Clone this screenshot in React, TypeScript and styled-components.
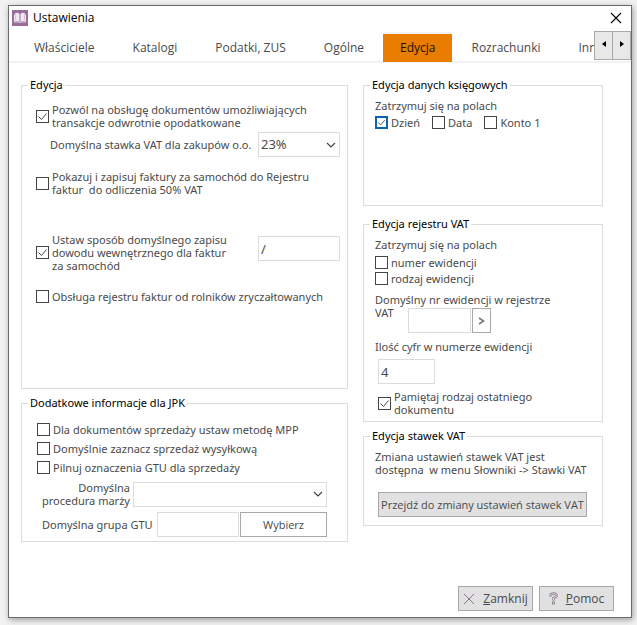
import React, { useId } from "react";
import styled, { createGlobalStyle } from "styled-components";

const GlobalStyle = createGlobalStyle`
  *, *::before, *::after { box-sizing: border-box; }
  body {
    margin: 0;
    background: #f2f2f2;
    color: #4a4a4a;
    font: 11px/13px "Noto Sans", "Open Sans", sans-serif;
  }
  button, input, select { font: inherit; color: inherit; margin: 0; border-radius: 0; }
`;

const Page = styled.div`
  display: flex;
  min-height: 100vh;
  padding: 5px 5px 7px 8px;
`;

const Window = styled.main`
  flex: 1;
  min-width: 0;
  display: flex;
  flex-direction: column;
  background: #fff;
  border: 1px solid #6b6b6b;
  box-shadow: 1px 2px 6px rgba(0, 0, 0, 0.35);
`;

const TitleBar = styled.header`
  display: flex;
  align-items: center;
  gap: 5px;
  height: 24px;
  padding: 0 9px 0 3px;
`;

const Title = styled.h1`
  flex: 1;
  margin: 0;
  color: #000;
  font: 12px/16px "Open Sans", "Noto Sans", sans-serif;
`;

const CloseButton = styled.button`
  display: flex;
  padding: 0;
  border: 0;
  background: none;
  color: #000;
`;

const TabBar = styled.nav`
  position: relative;
  border-bottom: 2px solid #f2f2f2;
`;

const TabList = styled.div`
  display: flex;
  height: 32px;
  padding: 2px 0 0 6px;
  margin-bottom: -1px;
  overflow: hidden;
`;

const Tab = styled.button<{ $active?: boolean }>`
  flex: none;
  padding: 0 ${(p) => (p.$active ? 17 : 19)}px;
  border: 0;
  border-top: 2px solid ${(p) => (p.$active ? "#f2f2f2" : "transparent")};
  background: ${(p) => (p.$active ? "#e87d00" : "transparent")};
  background-clip: padding-box;
  color: ${(p) => (p.$active ? "#1c0c00" : "#4a4a4a")};
  font: 12px/16px "Open Sans", "Noto Sans", sans-serif;
`;

const TabScroller = styled.div`
  position: absolute;
  top: 1px;
  right: 0;
  display: flex;
`;

const ScrollButton = styled.button`
  display: flex;
  align-items: center;
  justify-content: center;
  width: 19px;
  height: 29px;
  padding: 0 0 3px;
  border: 1px solid #a8a8a8;
  background: #e8e8e8;
  & + & { margin-left: -1px; }
`;

const Columns = styled.div`
  display: grid;
  grid-template-columns: minmax(0, 327fr) minmax(0, 240fr);
  gap: 15px;
  padding: 14px 28px 0 12px;
`;

const Column = styled.div`
  display: flex;
  flex-direction: column;
  gap: 6px;
`;

const Group = styled.fieldset<{ $minHeight?: number; $top?: number; $before?: number }>`
  min-width: 0;
  min-height: ${(p) => p.$minHeight ?? 0}px;
  margin: ${(p) => p.$before ?? 0}px 0 0;
  padding: ${(p) => p.$top ?? 6}px 7px 4px 11px;
  border: 1px solid #dcdcdc;
`;

const Legend = styled.legend`
  margin-left: -5px;
  padding: 0 2px;
  color: #000;
  line-height: 16px;
`;

type RowProps = {
  $top?: number;
  $indent?: number;
  $end?: number;
  $align?: string;
  $gap?: number;
  $spread?: boolean;
};

const Row = styled.div<RowProps>`
  display: flex;
  align-items: ${(p) => p.$align ?? "center"};
  justify-content: ${(p) => (p.$spread ? "space-between" : "flex-start")};
  gap: ${(p) => p.$gap ?? 0}px;
  margin-top: ${(p) => p.$top ?? 0}px;
  padding: 0 ${(p) => p.$end ?? 0}px 0 ${(p) => p.$indent ?? 0}px;
`;

const Stack = styled.div<{ $top: number; $gap: number }>`
  display: flex;
  flex-direction: column;
  gap: ${(p) => p.$gap}px;
  margin-top: ${(p) => p.$top}px;
`;

const RegisterField = styled.div`
  display: grid;
  grid-template: 15px auto / 33px 1fr;
  margin-top: 8px;
  & > label { grid-area: 1 / 1 / 3 / 3; }
  & > div { grid-area: 2 / 2; }
`;

const CheckLabel = styled.label`
  display: flex;
  align-items: center;
  gap: 3px;
  white-space: pre;
`;

const CheckInput = styled.input<{ $focused?: boolean }>`
  appearance: none;
  flex: none;
  width: 13px;
  height: 13px;
  border: 1px solid #444;
  background: #fff center / 11px 11px no-repeat;
  ${(p) => p.$focused && "border: 2px solid #0a64b4; background-size: 9px 9px;"}
  &:checked {
    background-image: url("data:image/svg+xml,%3Csvg xmlns='http://www.w3.org/2000/svg' viewBox='0 0 11 11'%3E%3Cpath d='M1.5 5.5l3 3 5-6' fill='none' stroke='%23444'/%3E%3C/svg%3E");
  }
`;

const Text = styled.p`
  margin: 0;
  white-space: pre;
`;

const FieldLabel = styled.label<{ $right?: boolean }>`
  white-space: pre;
  text-align: ${(p) => (p.$right ? "right" : "left")};
`;

const TextInput = styled.input<{ $width: number; $large?: boolean; $push?: boolean }>`
  width: ${(p) => p.$width}px;
  height: 25px;
  padding: 0 2px;
  margin-left: ${(p) => (p.$push ? "auto" : 0)};
  border: 1px solid #dcdcdc;
  background: #fff;
  font-size: ${(p) => (p.$large ? 13 : 11)}px;
`;

const SelectBox = styled.div<{ $width: number }>`
  display: grid;
  align-items: center;
  width: ${(p) => p.$width}px;
  margin-left: auto;
  & > * { grid-area: 1 / 1; }
  & > svg { justify-self: end; margin-right: 4px; pointer-events: none; }
`;

const Select = styled.select`
  appearance: none;
  width: 100%;
  height: 25px;
  padding: 0 2px;
  border: 1px solid #dcdcdc;
  background: #fff;
  font-size: 13px;
`;

const Button = styled.button<{ $width: number; $grey?: boolean; $large?: boolean }>`
  display: flex;
  align-items: center;
  justify-content: center;
  gap: 8px;
  width: ${(p) => p.$width}px;
  height: 25px;
  padding: 0;
  border: 1px solid #a8a8a8;
  background: ${(p) => (p.$grey ? "#e1e1e1" : "#fff")};
  font-family: "Open Sans", "Noto Sans", sans-serif;
  font-size: ${(p) => (p.$large ? 12 : 11)}px;
  white-space: nowrap;
`;

const Footer = styled.footer`
  display: flex;
  justify-content: flex-end;
  gap: 6px;
  margin-top: auto;
  padding: 20px 17px 6px;
`;

const BookIcon = () => (
  <svg width="16" height="16" viewBox="0 0 16 16" aria-hidden="true">
    <rect width="16" height="16" fill="#9a6c9a" />
    <path d="M2 12V5l1-1v-.5Q5.500 2 7.500 4v8Q5.500 10.500 3 11.500zM14 12V5l-1-1v-.5Q10.500 2 8.500 4v8q2-1.500 4.500-.5z" fill="#efe9ef" />
    <path d="M3.500 4.500V10.500M12.500 4.500V10.500" stroke="#c4abc5" strokeWidth="0.600" />
    <path d="M2 12h5l1 .8 1-.8h5" fill="none" stroke="#efe9ef" strokeWidth="0.800" />
  </svg>
);

const CloseIcon = () => (
  <svg width="12" height="12" viewBox="0 0 12 12" aria-hidden="true">
    <path d="M1 1l10 10M11 1L1 11" stroke="currentColor" strokeWidth="1.1" />
  </svg>
);

const ChevronDown = () => (
  <svg width="10" height="6" viewBox="0 0 10 6" aria-hidden="true">
    <path d="M1 1l4 4 4-4" fill="none" stroke="#444" strokeWidth="1.2" />
  </svg>
);

const ChevronRight = () => (
  <svg width="7" height="8" viewBox="0 0 7 8" aria-hidden="true">
    <path d="M1 1l4.500 3L1 7" fill="none" stroke="#857585" strokeWidth="1.700" />
  </svg>
);

const Arrow = ({ left }: { left?: boolean }) => (
  <svg width="4" height="6" viewBox="0 0 4 6" aria-hidden="true">
    <path d={left ? "M4 0v6L0 3z" : "M0 0v6l4-3z"} fill="#000" />
  </svg>
);

const CrossIcon = () => (
  <svg width="12" height="12" viewBox="0 0 12 12" aria-hidden="true">
    <path d="M1 1l10 10M11 1L1 11" stroke="#8a708c" />
  </svg>
);

const HelpIcon = () => (
  <svg width="9" height="13" viewBox="0 0 9 13" aria-hidden="true">
    <path d="M1.500 4.500V3.800Q1.500 1.500 4.500 1.500T7.500 3.800Q7.500 5.200 4.500 6V8.500" fill="none" stroke="#8c7c8c" strokeWidth="2.400" />
    <path d="M1.500 4V3.800Q1.500 1.500 4.500 1.500T7.500 3.800Q7.500 5.200 4.500 6V8" fill="none" stroke="#eee" strokeWidth="0.800" />
    <rect x="3.500" y="10" width="2" height="2" fill="#eee" stroke="#8c7c8c" strokeWidth="0.900" />
  </svg>
);

type CheckProps = { text: string; checked?: boolean; focused?: boolean };

const Check = ({ text, checked, focused }: CheckProps) => {
  const id = useId();
  return (
    <CheckLabel htmlFor={id}>
      <CheckInput id={id} type="checkbox" defaultChecked={checked} $focused={focused} />
      <span>{text}</span>
    </CheckLabel>
  );
};

const tabs = ["Właściciele", "Katalogi", "Podatki, ZUS", "Ogólne", "Edycja", "Rozrachunki", "Inne"];

export default function App() {
  return (
    <Page>
      <GlobalStyle />
      <Window>
        <TitleBar>
          <BookIcon />
          <Title>Ustawienia</Title>
          <CloseButton type="button" aria-label="Zamknij okno"><CloseIcon /></CloseButton>
        </TitleBar>

        <TabBar>
          <TabList role="tablist">
            {tabs.map((name) => (
              <Tab key={name} type="button" role="tab" aria-selected={name === "Edycja"} $active={name === "Edycja"}>
                {name}
              </Tab>
            ))}
          </TabList>
          <TabScroller>
            <ScrollButton type="button" aria-label="Poprzednie zakładki"><Arrow left /></ScrollButton>
            <ScrollButton type="button" aria-label="Następne zakładki"><Arrow /></ScrollButton>
          </TabScroller>
        </TabBar>

        <Columns>
          <Column>
            <Group $minHeight={312} $top={10}>
              <Legend>Edycja</Legend>
              <Row $indent={3}>
                <Check checked text={"Pozwól na obsługę dokumentów umożliwiających\ntransakcje odwrotnie opodatkowane"} />
              </Row>
              <Row $top={3} $indent={17}>
                <FieldLabel htmlFor="vat-rate">Domyślna stawka VAT dla zakupów o.o.</FieldLabel>
                <SelectBox $width={82}>
                  <Select id="vat-rate" defaultValue="23%"><option>23%</option></Select>
                  <ChevronDown />
                </SelectBox>
              </Row>
              <Row $top={13} $indent={3}>
                <Check text={"Pokazuj i zapisuj faktury za samochód do Rejestru\nfaktur  do odliczenia 50% VAT"} />
              </Row>
              <Row $top={37} $indent={3} $align="flex-start" $spread>
                <Check checked text={"Ustaw sposób domyślnego zapisu\ndowodu wewnętrznego dla faktur\nza samochód"} />
                <Row $top={3}>
                  <TextInput $width={82} $large aria-label="Sposób zapisu dowodu wewnętrznego" defaultValue="/" />
                </Row>
              </Row>
              <Row $top={18} $indent={3}>
                <Check text="Obsługa rejestru faktur od rolników zryczałtowanych" />
              </Row>
            </Group>

            <Group $top={12}>
              <Legend>Dodatkowe informacje dla JPK</Legend>
              <Stack $top={0} $gap={6}>
                <Row $indent={4}><Check text="Dla dokumentów sprzedaży ustaw metodę MPP" /></Row>
                <Row $indent={4}><Check text="Domyślnie zaznacz sprzedaż wysyłkową" /></Row>
                <Row $indent={4}><Check text="Pilnuj oznaczenia GTU dla sprzedaży" /></Row>
              </Stack>
              <Row $top={7} $indent={9} $end={13}>
                <FieldLabel htmlFor="margin" $right>{"Domyślna\nprocedura marży"}</FieldLabel>
                <SelectBox $width={194}>
                  <Select id="margin" defaultValue=""><option value="" /></Select>
                  <ChevronDown />
                </SelectBox>
              </Row>
              <Row $top={5} $indent={9} $end={13} $gap={1}>
                <FieldLabel htmlFor="gtu">Domyślna grupa GTU</FieldLabel>
                <TextInput id="gtu" $width={82} $push />
                <Button type="button" $width={87}>Wybierz</Button>
              </Row>
            </Group>
          </Column>

          <Column>
            <Group $minHeight={129}>
              <Legend>Edycja danych księgowych</Legend>
              <Text>Zatrzymuj się na polach</Text>
              <Row $top={4} $gap={12}>
                <Check checked focused text="Dzień" />
                <Check text="Data" />
                <Check text="Konto 1" />
              </Row>
            </Group>

            <Group $minHeight={206} $before={4}>
              <Legend>Edycja rejestru VAT</Legend>
              <Text>Zatrzymuj się na polach</Text>
              <Stack $top={5} $gap={3}>
                <Check text="numer ewidencji" />
                <Check text="rodzaj ewidencji" />
              </Stack>
              <RegisterField>
                <FieldLabel htmlFor="register">{"Domyślny nr ewidencji w rejestrze\nVAT"}</FieldLabel>
                <Row $gap={1}>
                  <TextInput id="register" $width={63} />
                  <Button type="button" $width={19} aria-label="Wybierz ewidencję"><ChevronRight /></Button>
                </Row>
              </RegisterField>
              <Row $top={7}><FieldLabel htmlFor="digits">Ilość cyfr w numerze ewidencji</FieldLabel></Row>
              <Row $top={6} $indent={3}>
                <TextInput id="digits" $width={57} $large defaultValue="4" />
              </Row>
              <Row $top={6} $indent={3}>
                <Check checked text={"Pamiętaj rodzaj ostatniego\ndokumentu"} />
              </Row>
            </Group>

            <Group $minHeight={98}>
              <Legend>Edycja stawek VAT</Legend>
              <Text>{"Zmiana ustawień stawek VAT jest\ndostępna  w menu Słowniki -> Stawki VAT"}</Text>
              <Row $top={16} $indent={3}>
                <Button type="button" $width={209} $grey>Przejdź do zmiany ustawień stawek VAT</Button>
              </Row>
            </Group>
          </Column>
        </Columns>

        <Footer>
          <Button type="button" $width={75} $grey $large><CrossIcon /><span><u>Z</u>amknij</span></Button>
          <Button type="button" $width={75} $grey $large><HelpIcon /><span><u>P</u>omoc</span></Button>
        </Footer>
      </Window>
    </Page>
  );
}
